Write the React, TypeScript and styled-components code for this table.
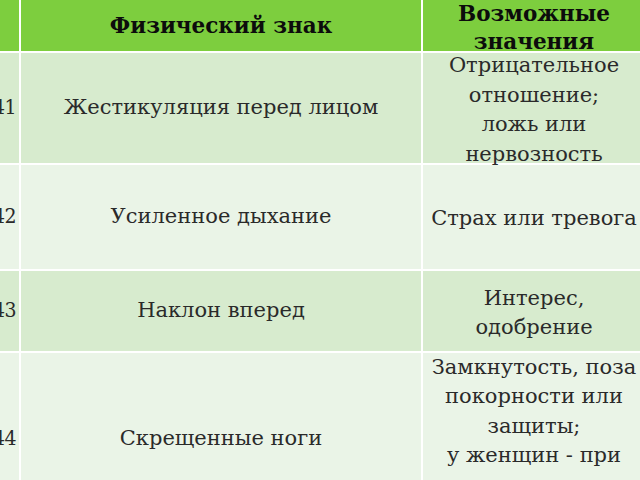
import React from "react";
import styled, { createGlobalStyle } from "styled-components";

const Global = createGlobalStyle`
  html, body {
    margin: 0;
    padding: 0;
    width: 640px;
    height: 480px;
    overflow: hidden;
    background: #ffffff;
  }
`;

const Table = styled.div`
  display: grid;
  grid-template-columns: 33px 400px 222px;
  grid-template-rows: 51px 110px 104px 80px 172px;
  gap: 2px;
  background: #ffffff;
  margin-left: -14px;
  width: max-content;
  font-family: "DejaVu Serif", "Liberation Serif", serif;
`;

const Cell = styled.div<{ $tone: "head" | "dark" | "light" }>`
  display: flex;
  align-items: center;
  justify-content: center;
  text-align: center;
  overflow: visible;
  min-width: 0;
  background: ${(p) =>
    p.$tone === "head" ? "#7dce3e" : p.$tone === "dark" ? "#d7ebce" : "#eaf4e7"};
  color: ${(p) => (p.$tone === "head" ? "#0c0c0c" : "#2a2a2a")};
  font-size: ${(p) => (p.$tone === "head" ? "21.5px" : "21px")};
  font-weight: ${(p) => (p.$tone === "head" ? 700 : 400)};
  line-height: ${(p) => (p.$tone === "head" ? "28px" : "29.5px")};
  white-space: nowrap;
`;

const NumCell = styled(Cell)`
  justify-content: flex-end;
  padding-right: 3px;
  font-family: "DejaVu Serif Condensed", "DejaVu Serif", serif;
  letter-spacing: -0.5px;
`;

const Lines = styled.div<{ $shift?: number }>`
  display: flex;
  flex-direction: column;
  align-items: center;
  transform: translateY(${(p) => p.$shift ?? 0}px);
`;

type Row = { n: string; sign: string; meaning: string[] };

const rows: Row[] = [
  {
    n: "41",
    sign: "Жестикуляция перед лицом",
    meaning: ["Отрицательное", "отношение;", "ложь или", "нервозность"],
  },
  { n: "42", sign: "Усиленное дыхание", meaning: ["Страх или тревога"] },
  { n: "43", sign: "Наклон вперед", meaning: ["Интерес,", "одобрение"] },
  {
    n: "44",
    sign: "Скрещенные ноги",
    meaning: [
      "Замкнутость, поза",
      "покорности или",
      "защиты;",
      "у женщин - при",
      "знакомстве с",
      "мужчиной",
    ],
  },
];

export default function App() {
  return (
    <>
      <Global />
      <Table>
        <Cell $tone="head" />
        <Cell $tone="head">Физический знак</Cell>
        <Cell $tone="head">
          <Lines $shift={2}>
            <span>Возможные</span>
            <span>значения</span>
          </Lines>
        </Cell>
        {rows.map((r, i) => {
          const tone = i % 2 === 0 ? "dark" : "light";
          return (
            <React.Fragment key={r.n}>
              <NumCell $tone={tone}>{r.n}</NumCell>
              <Cell $tone={tone}>{r.sign}</Cell>
              <Cell $tone={tone}>
                <Lines $shift={2}>
                  {r.meaning.map((m) => (
                    <span key={m}>{m}</span>
                  ))}
                </Lines>
              </Cell>
            </React.Fragment>
          );
        })}
      </Table>
    </>
  );
}
